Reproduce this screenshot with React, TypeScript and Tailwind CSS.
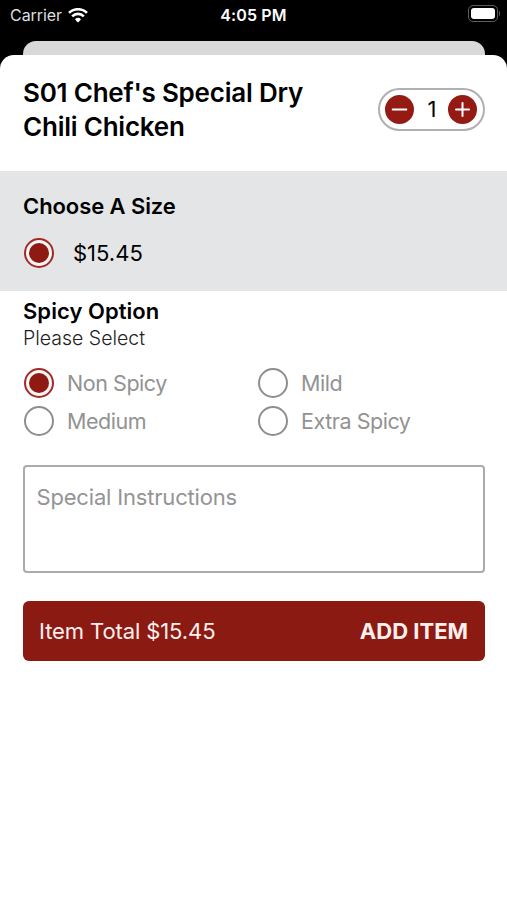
import React from "react";

function Radio({ checked = false }: { checked?: boolean }) {
  return (
    <span className={"flex size-[30px] shrink-0 items-center justify-center rounded-full border-2 " + (checked ? "border-[#a32a24] bg-[#f8f6f6]" : "border-[#8e8e8e]")}>
      {checked && <span className="size-5 rounded-full bg-[#8f1a13]" />}
    </span>
  );
}

function Option({ label, checked }: { label: string; checked?: boolean }) {
  return (
    <div className="flex h-[38px] items-center gap-[13px]">
      <Radio checked={checked} />
      <span className="text-[21.5px] leading-7 tracking-[-0.45px] text-[#929292]">{label}</span>
    </div>
  );
}

function StepButton({ label, path }: { label: string; path: string }) {
  return (
    <button aria-label={label} className="flex size-[29px] items-center justify-center rounded-full bg-[#961a14]">
      <svg width="29" height="29" viewBox="0 0 29 29" fill="none" stroke="white" strokeWidth="2" strokeLinecap="round">
        <path d={path} />
      </svg>
    </button>
  );
}

export default function App() {
  return (
    <div className="flex h-[900px] w-[507px] flex-col overflow-hidden bg-black font-['Inter',sans-serif] text-black">
      <header className="grid h-[41px] shrink-0 grid-cols-3 items-start pl-[10px] pr-[7px] pt-[5px] text-white">
        <div className="flex h-5 items-center gap-[6px] text-[16px] leading-5 text-[#dedede]">
          <span className="tracking-[-0.05px]">Carrier</span>
          <svg width="20" height="15" viewBox="0 0 20 15" fill="none" stroke="white" strokeWidth="2.6">
            <path d="M1 4.9a12.9 12.9 0 0 1 18 0M4.2 8.3a8.2 8.2 0 0 1 11.6 0" />
            <path d="M7 11.2a4.5 4.5 0 0 1 6 0l-2.3 2.7q-.7.6-1.4 0z" fill="white" stroke="none" />
          </svg>
        </div>
        <div className="pr-[3px] text-center text-[16px] font-semibold leading-5 tracking-[0.15px]">4:05 PM</div>
        <div className="flex items-center justify-end gap-px">
          <div className="h-[17px] w-[30px] rounded-[5px] border border-[#5c5c5c] p-[2px]">
            <div className="h-full rounded-[3px] bg-white" />
          </div>
          <div className="h-[5px] w-px rounded-r-full bg-[#5c5c5c]" />
        </div>
      </header>
      <div className="ml-[23px] mr-[22px] h-[14px] shrink-0 rounded-t-[13px] bg-[#d9d9d9]" />
      <main className="flex-1 rounded-t-[14px] bg-white">
        <div className="flex h-[116px] justify-between pl-[23px] pr-[22px]">
          <h1 className="pt-[21px] text-[26px] font-semibold leading-[34px] tracking-[-0.22px]">
            S01 Chef's Special Dry<br />Chili Chicken
          </h1>
          <div className="mt-[33px] flex h-[43px] w-[107px] items-center justify-between rounded-full border-2 border-[#b0afb2] pl-[5px] pr-[6px] text-[22px]">
            <StepButton label="Decrease quantity" path="M7.7 14.5h13.6" />
            <span className="pl-[2px]">1</span>
            <StepButton label="Increase quantity" path="M8 14.5h13M14.5 8v13" />
          </div>
        </div>
        <section className="h-[120px] bg-[#e4e5e7] px-[23px] pt-5">
          <h2 className="text-[22px] font-semibold leading-[30px] tracking-[-0.08px]">Choose A Size</h2>
          <div className="mt-[17px] flex items-center gap-[19px] pl-px text-[22px] leading-[30px]">
            <Radio checked /><span>$15.45</span>
          </div>
        </section>
        <section className="pl-[23px] pr-[22px] pt-[5px]">
          <h2 className="text-[22px] font-semibold leading-[30px] tracking-[0.05px]">Spicy Option</h2>
          <p className="text-[19.5px] font-light leading-6 text-[#222]">Please Select</p>
          <div className="mt-[14px] grid grid-cols-[234px_1fr] pl-px">
            <Option label="Non Spicy" checked />
            <Option label="Mild" />
            <Option label="Medium" />
            <Option label="Extra Spicy" />
          </div>
          <div className="mt-[25px] h-[108px] rounded border-2 border-[#ababab] pl-[11.5px] pt-[15px] text-[22px] leading-[30px] tracking-[-0.18px] text-[#949496]">
            Special Instructions
          </div>
          <button className="mt-7 flex h-[60px] w-full items-center justify-between rounded-[6px] bg-[#8b1a13] pl-4 pr-[17px] text-[22px] text-[#fff0ee]">
            <span className="tracking-[-0.1px]">Item Total $15.45</span>
            <span className="font-bold">ADD ITEM</span>
          </button>
        </section>
      </main>
    </div>
  );
}
